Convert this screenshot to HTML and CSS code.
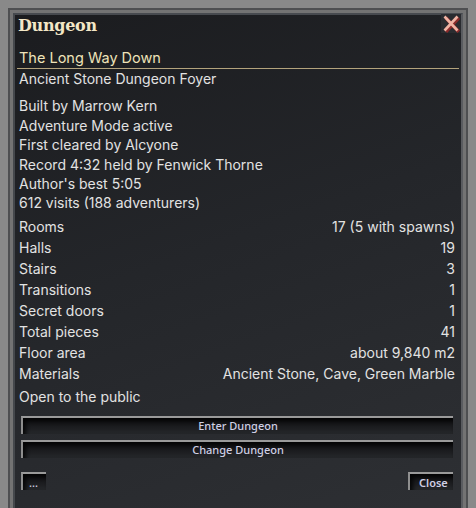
FILE: index.html
```html
<!DOCTYPE html>
<html>
<head>
<meta charset="utf-8">
<link rel="stylesheet" href="styles.css">
</head>
<body>
<div class="window">
  <div class="panel">
    <div class="titlebar">
      <span class="title">Dungeon</span>
      <button class="xbtn" aria-label="close">
        <svg width="20" height="19" viewBox="0 0 20 19">
          <path d="M4 3 L17 17 M17 3 L4 17" stroke="#8a2b2b" stroke-width="3.6" stroke-linecap="butt" fill="none" transform="translate(0.8,0.8)"/>
          <path d="M3.5 2.5 L16.5 16.5 M16.5 2.5 L3.5 16.5" stroke="#f0b4a4" stroke-width="2.6" stroke-linecap="butt" fill="none"/>
        </svg>
      </button>
    </div>
    <div class="name">The Long Way Down</div>
    <div class="line">Ancient Stone Dungeon Foyer</div>
    <div class="info">
      <div class="line">Built by Marrow Kern</div>
      <div class="line">Adventure Mode active</div>
      <div class="line">First cleared by Alcyone</div>
      <div class="line">Record 4:32 held by Fenwick Thorne</div>
      <div class="line">Author's best 5:05</div>
      <div class="line">612 visits (188 adventurers)</div>
    </div>
    <div class="stats">
      <div class="row"><span>Rooms</span><span>17 (5 with spawns)</span></div>
      <div class="row"><span>Halls</span><span>19</span></div>
      <div class="row"><span>Stairs</span><span>3</span></div>
      <div class="row"><span>Transitions</span><span>1</span></div>
      <div class="row"><span>Secret doors</span><span>1</span></div>
      <div class="row"><span>Total pieces</span><span>41</span></div>
      <div class="row"><span>Floor area</span><span>about 9,840 m2</span></div>
      <div class="row"><span>Materials</span><span>Ancient Stone, Cave, Green Marble</span></div>
    </div>
    <div class="line public">Open to the public</div>
    <div class="actions">
      <button class="btn wide">Enter Dungeon</button>
      <button class="btn wide">Change Dungeon</button>
    </div>
    <div class="footer">
      <button class="btn small dots">...</button>
      <button class="btn small close">Close</button>
    </div>
  </div>
</div>
</body>
</html>
```

FILE: styles.css
```css
html, body {
  margin: 0;
  padding: 0;
  background: #898989;
  height: 508px;
  overflow: hidden;
}
.window {
  margin: 8px 8px 0 8px;
  height: 520px;
  border: 2px solid #4e4f51;
  border-bottom: none;
  background: #737373;
  padding: 3px 3px 0 3px;
  box-sizing: border-box;
}
.panel {
  height: 100%;
  box-sizing: border-box;
  border-top: 2px solid #474a4f;
  border-left: 2px solid #45484c;
  border-right: 2px solid #5a5c60;
  background: linear-gradient(160deg, #1b1c1f 0%, #24262a 45%, #2e3034 100%);
  padding: 0 6px 0 4px;
  font-family: Inter, "Noto Sans", sans-serif;
  color: #e2e2e2;
  font-size: 14px;
}
.titlebar {
  display: flex;
  justify-content: space-between;
  align-items: flex-start;
  height: 34px;
}
.title {
  font-family: "DejaVu Serif", serif;
  font-weight: bold;
  font-size: 16px;
  color: #f3e7c6;
  padding-top: 1px;
  margin-left: -1px;
  letter-spacing: -0.3px;
}
.xbtn {
  margin: 0;
  padding: 0;
  border: none;
  width: 20px;
  height: 19px;
  background: #2a2c30;
  margin-right: -6px;
  margin-top: -1px;
  display: flex;
}
.name {
  color: #efe3b9;
  font-size: 14.5px;
  line-height: 18px;
  border-bottom: 1px solid #b3a37c;
  padding-bottom: 1px;
  margin-left: -2px;
  margin-right: -4px;
  padding-left: 2px;
}
.line {
  line-height: 19.4px;
}
.info {
  margin-top: 8px;
}
.stats {
  margin-top: 3px;
}
.row {
  display: flex;
  justify-content: space-between;
  line-height: 21px;
}
.public {
  margin-top: 3px;
}
.actions {
  display: flex;
  flex-direction: column;
  gap: 6px;
  margin: 10px 2px 0 2px;
}
.btn {
  font-family: "Noto Sans", sans-serif;
  font-size: 11px;
  font-weight: 500;
  color: #cfcfe4;
  border: none;
  border-top: 2px solid #9a9a9a;
  border-left: 2px solid #8e8e8e;
  background: linear-gradient(180deg, #0e0e10 0%, #1c1d20 60%, #26282b 100%);
  box-shadow: inset 3px 3px 4px rgba(0,0,0,0.8);
  padding: 0;
  margin: 0;
}
.wide {
  height: 18px;
  line-height: 16px;
}
.footer {
  display: flex;
  justify-content: space-between;
  margin: 14px 2px 0 2px;
}
.small {
  height: 18px;
  line-height: 18px;
}
.dots {
  width: 25px;
  text-align: left;
  padding-left: 6px;
}
.close {
  width: 45px;
  text-align: left;
  padding-left: 9px;
  font-weight: 600;
}
```
